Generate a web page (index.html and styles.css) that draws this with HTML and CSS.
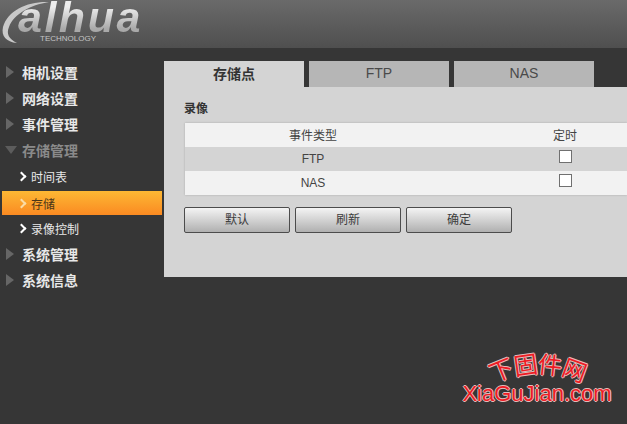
FILE: index.html
```html
<!DOCTYPE html>
<html>
<head>
    <title>存储点</title>
    <link rel="stylesheet" href="styles.css">
</head>
<body>
    <div class="header">
        <div class="logo">
            <svg class="logo-ring" width="70" height="48" viewBox="0 0 70 48">
                <path d="M49 2 C28 1 8 10 3 27 C1 36 6 42 17 43 C9 39 6 34 9 27 C14 14 30 5 49 2 Z" fill="#c9c9c9"/>
            </svg>
            <span class="logo-name">alhua</span>
            <span class="logo-sub">TECHNOLOGY</span>
        </div>
    </div>

    <div class="main">
        <div class="sidebar">
            <div class="menu-item"><span class="arrow"></span>相机设置</div>
            <div class="menu-item"><span class="arrow"></span>网络设置</div>
            <div class="menu-item"><span class="arrow"></span>事件管理</div>
            <div class="menu-item open"><span class="arrow-down"></span>存储管理</div>
            <div class="sub-item"><span class="chevron"></span>时间表</div>
            <div class="sub-item current"><span class="chevron"></span>存储</div>
            <div class="sub-item"><span class="chevron"></span>录像控制</div>
            <div class="menu-item"><span class="arrow"></span>系统管理</div>
            <div class="menu-item"><span class="arrow"></span>系统信息</div>
        </div>

        <div class="content">
            <div class="tabs">
                <div class="tab active">存储点</div>
                <div class="tab">FTP</div>
                <div class="tab">NAS</div>
            </div>
            <div class="panel">
                <div class="section-title">录像</div>
                <div class="record-table">
                    <div class="row head">
                        <span class="col-type">事件类型</span>
                        <span class="col-check">定时</span>
                    </div>
                    <div class="row even">
                        <span class="col-type">FTP</span>
                        <span class="col-check"><span class="checkbox"></span></span>
                    </div>
                    <div class="row">
                        <span class="col-type">NAS</span>
                        <span class="col-check"><span class="checkbox"></span></span>
                    </div>
                </div>
                <div class="buttons">
                    <button>默认</button>
                    <button>刷新</button>
                    <button>确定</button>
                </div>
            </div>
        </div>
    </div>

    <div class="watermark">
        <div class="wm-arc">
            <span class="wm-1">下</span><span class="wm-2">固</span><span class="wm-3">件</span><span class="wm-4">网</span>
        </div>
        <div class="wm-url">XiaGuJian.com</div>
    </div>
</body>
</html>
```
FILE: styles.css
```css
* {
    margin: 0;
    padding: 0;
    box-sizing: border-box;
}

body {
    width: 627px;
    height: 424px;
    overflow: hidden;
    position: relative;
    background: #363636;
    font-family: "Noto Sans CJK SC", "Liberation Sans", sans-serif;
}

.header {
    height: 48px;
    background: linear-gradient(180deg, #6a6a6a 0%, #4f4f4f 100%);
}

.logo {
    position: relative;
    width: 170px;
    height: 48px;
}

.logo-ring {
    position: absolute;
    left: 0;
    top: 0;
}

.logo-name {
    position: absolute;
    left: 18px;
    top: 0;
    font-family: "Liberation Sans", sans-serif;
    font-size: 43px;
    line-height: 34px;
    font-weight: bold;
    font-style: italic;
    letter-spacing: 2.5px;
    background: linear-gradient(180deg, #eeeeee 20%, #a9a9a9 85%);
    -webkit-background-clip: text;
    background-clip: text;
    color: transparent;
}

.logo-sub {
    position: absolute;
    left: 40px;
    top: 34px;
    font-family: "Liberation Sans", sans-serif;
    font-size: 8px;
    line-height: 10px;
    color: #c4c4c4;
}

.main {
    display: flex;
    padding-top: 13px;
}

/* Left menu */
.sidebar {
    width: 164px;
    margin-top: -2px;
    flex-shrink: 0;
}

.menu-item {
    display: flex;
    align-items: center;
    height: 26px;
    padding-left: 6px;
    font-size: 14px;
    font-weight: bold;
    color: #e8e8e8;
}

.menu-item.open {
    color: #8a8a8a;
}

.arrow {
    width: 0;
    height: 0;
    margin-right: 8px;
    border-left: 8px solid #666;
    border-top: 6px solid transparent;
    border-bottom: 6px solid transparent;
}

.arrow-down {
    width: 0;
    height: 0;
    margin-left: -1px;
    margin-right: 5px;
    border-top: 8px solid #5c5c5c;
    border-left: 6px solid transparent;
    border-right: 6px solid transparent;
}

.sub-item {
    display: flex;
    align-items: center;
    height: 26px;
    padding-left: 18px;
    font-size: 12px;
    color: #e8e8e8;
}

.sub-item.current {
    height: 24px;
    margin: 2px 2px 0 2px;
    padding-left: 16px;
    color: #4a3518;
    background: linear-gradient(180deg, #fdb834 0%, #fb8a22 100%);
}

.chevron {
    width: 7px;
    height: 7px;
    margin-right: 6px;
    border-top: 2px solid #fff;
    border-right: 2px solid #fff;
    transform: rotate(45deg);
}

.sub-item.current .chevron {
    border-color: #fbdca6;
}

/* Right content */
.content {
    width: 463px;
    color: #3c3c3c;
}

.tabs {
    display: flex;
    gap: 5px;
    height: 26px;
}

.tab {
    width: 140px;
    background: #b6b6b6;
    text-align: center;
    font-family: "Liberation Sans", "Noto Sans CJK SC", sans-serif;
    font-size: 14px;
    line-height: 24px;
    color: #4a4a4a;
}

.tab.active {
    background: #d4d4d4;
    font-family: "Noto Sans CJK SC", sans-serif;
    font-weight: bold;
    color: #333;
}

.panel {
    height: 190px;
    padding: 13px 0 0 20px;
    background: #d4d4d4;
}

.section-title {
    font-size: 12px;
    line-height: 16px;
    font-weight: bold;
    color: #333;
}

/* Table runs on past the window edge, only the first columns show */
.record-table {
    margin-top: 7px;
    margin-left: 1px;
    overflow: hidden;
    background: #f2f2f2;
    box-shadow: 0 0 2px #a8a8a8;
}

.row {
    display: flex;
    height: 24px;
    align-items: center;
    font-size: 12px;
    color: #444;
    background: #f2f2f2;
}

.row.head {
    padding-bottom: 2px;
}

.row.even {
    background: #d4d4d4;
}

.col-type {
    flex: 0 0 256px;
    text-align: center;
    font-family: "Liberation Sans", "Noto Sans CJK SC", sans-serif;
}

.col-check {
    flex: 0 0 248px;
    display: flex;
    justify-content: center;
    font-family: "Liberation Sans", "Noto Sans CJK SC", sans-serif;
}

.checkbox {
    width: 13px;
    height: 13px;
    margin-top: -5px;
    background: #fff;
    border: 1px solid #707070;
}

.buttons {
    display: flex;
    gap: 5px;
    margin-top: 12px;
}

button {
    width: 106px;
    height: 26px;
    padding-bottom: 3px;
    border: 1px solid #4c4c4c;
    border-radius: 2px;
    background: linear-gradient(180deg, #f4f4f4 0%, #b0b0b0 100%);
    font-family: "Noto Sans CJK SC", sans-serif;
    font-size: 12px;
    color: #3c3c3c;
}

/* Site watermark, lies over the page */
.watermark {
    position: absolute;
    left: 460px;
    top: 350px;
    width: 154px;
    color: #ee1c25;
    text-shadow: 1px 0 #e2bcbc, -1px 0 #e2bcbc, 0 1px #e2bcbc, 0 -1px #e2bcbc;
}

.wm-arc {
    display: flex;
    justify-content: center;
    height: 32px;
    padding-left: 1px;
    font-size: 24px;
    line-height: 26px;
}

.wm-arc span {
    display: block;
}

.wm-1 { transform: translateY(6px) rotate(-22deg); }
.wm-2 { transform: translateY(1px) rotate(-8deg); }
.wm-3 { transform: translateY(1px) rotate(6deg); }
.wm-4 { transform: translateY(6px) rotate(20deg); }

.wm-url {
    font-family: "Liberation Sans", sans-serif;
    font-size: 22px;
    line-height: 24px;
    text-align: center;
}
```
